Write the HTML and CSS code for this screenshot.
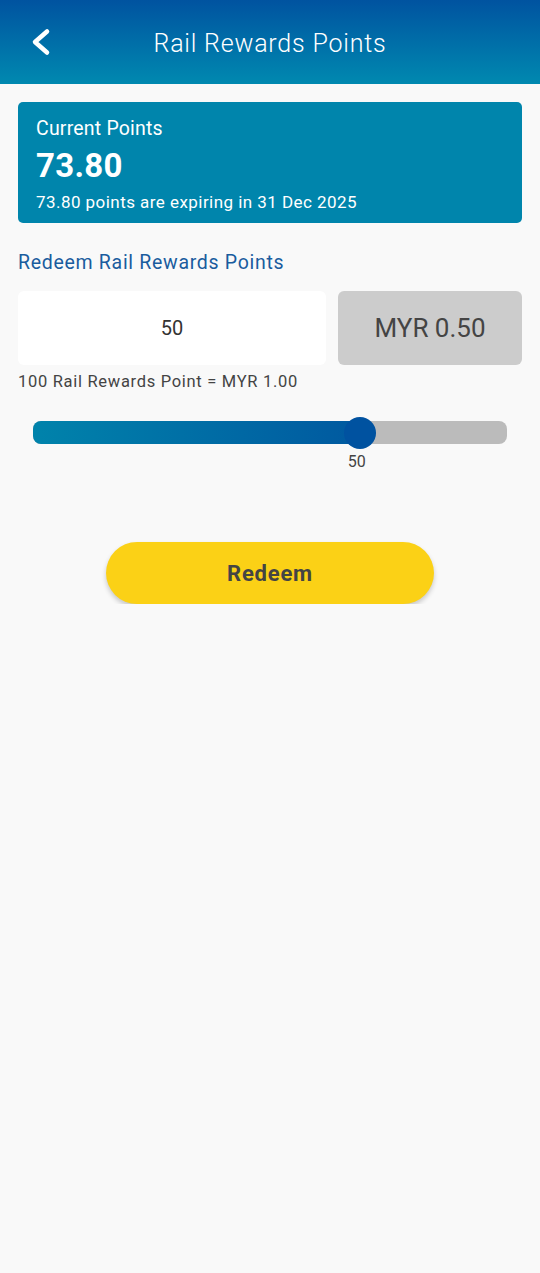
FILE: index.html
```html
<!DOCTYPE html>
<html lang="en">
<head>
    <meta charset="UTF-8">
    <meta name="viewport" content="width=device-width, initial-scale=1.0">
    <title>Rail Rewards Points</title>
    <link rel="stylesheet" href="styles.css">
</head>
<body>
    <!-- Top bar -->
    <header class="topbar">
        <button class="back-btn" aria-label="Back">
            <svg width="22" height="28" viewBox="0 0 22 28">
                <path d="M17 3.5 L5 14 L17 24.5" fill="none" stroke="#fff" stroke-width="4.5" stroke-linecap="round" stroke-linejoin="round"/>
            </svg>
        </button>
        <h1 class="topbar-title">Rail Rewards Points</h1>
    </header>

    <main class="content">
        <!-- Current points card -->
        <div class="points-card">
            <div class="points-label">Current Points</div>
            <div class="points-value">73.80</div>
            <div class="points-expiry">73.80 points are expiring in 31 Dec 2025</div>
        </div>

        <h2 class="section-title">Redeem Rail Rewards Points</h2>

        <div class="redeem-row">
            <div class="points-input">50</div>
            <div class="myr-box">MYR 0.50</div>
        </div>
        <p class="rate">100 Rail Rewards Point = MYR 1.00</p>

        <!-- Slider -->
        <div class="slider">
            <div class="slider-track">
                <div class="slider-fill" style="width: 69%;"></div>
                <div class="slider-thumb" style="left: 69%;"></div>
            </div>
            <div class="slider-value-row">
                <span class="slider-value" style="left: 68.3%;">50</span>
            </div>
        </div>

        <div class="btn-wrap">
            <button class="redeem-btn">Redeem</button>
        </div>
    </main>
</body>
</html>
```

FILE: styles.css
```css
body {
    margin: 0;
    padding: 0;
    font-family: Roboto, "Liberation Sans", Arial, sans-serif;
    background-color: #f9f9f9;
    color: #444;
}

.topbar {
    height: 84px;
    background: linear-gradient(to bottom, #0053a0, #0089b0);
    display: flex;
    align-items: center;
    justify-content: center;
    position: relative;
}

.back-btn {
    position: absolute;
    left: 30px;
    top: 28px;
    background: none;
    border: none;
    padding: 0;
    cursor: pointer;
}

.topbar-title {
    margin: 0;
    color: #fff;
    font-size: 25px;
    font-weight: 300;
    letter-spacing: 0.8px;
    padding-top: 2px;
}

.content {
    padding: 18px 18px 0 18px;
}

.points-card {
    background-color: #0085ac;
    border-radius: 5px;
    padding: 15px 18px 10px 18px;
    color: #fff;
}

.points-label {
    font-size: 19.5px;
    line-height: 24px;
    letter-spacing: 0.2px;
}

.points-value {
    font-size: 33px;
    font-weight: 700;
    line-height: 42px;
    margin-top: 4px;
    letter-spacing: 0.3px;
}

.points-expiry {
    font-size: 17px;
    line-height: 22px;
    margin-top: 4px;
    letter-spacing: 0.45px;
}

.section-title {
    margin: 28px 0 16px 0;
    font-size: 19.5px;
    font-weight: 400;
    color: #1a5c9e;
    line-height: 24px;
    letter-spacing: 0.7px;
}

.redeem-row {
    display: flex;
    gap: 12px;
}

.points-input {
    flex: 0 0 308px;
    height: 74px;
    background: #fff;
    border-radius: 6px;
    display: flex;
    align-items: center;
    justify-content: center;
    font-size: 20px;
    color: #333;
}

.myr-box {
    flex: 1;
    height: 74px;
    background: #cccccc;
    border-radius: 6px;
    display: flex;
    align-items: center;
    justify-content: center;
    font-size: 26px;
    color: #444;
}

.rate {
    margin: 7px 0 0 0;
    font-size: 16.5px;
    line-height: 20px;
    color: #444;
    letter-spacing: 0.7px;
}

.slider {
    padding: 29px 15px 0 15px;
}

.slider-track {
    position: relative;
    height: 23px;
    border-radius: 8px;
    background: #bbbbbb;
}

.slider-fill {
    height: 100%;
    border-radius: 8px 0 0 8px;
    background: linear-gradient(to right, #0083ab, #0059a0);
}

.slider-thumb {
    position: absolute;
    top: 50%;
    width: 32px;
    height: 32px;
    margin-left: -16px;
    margin-top: -16px;
    border-radius: 50%;
    background: #0052a0;
}

.slider-value-row {
    position: relative;
    height: 30px;
}

.slider-value {
    position: absolute;
    top: 8px;
    transform: translateX(-50%);
    font-size: 16px;
    color: #444;
}

.btn-wrap {
    display: flex;
    justify-content: center;
    padding-top: 68px;
}

.redeem-btn {
    width: 328px;
    height: 62px;
    border: none;
    border-radius: 31px;
    background-color: #fbd116;
    box-shadow: 0 3px 5px rgba(0, 0, 0, 0.2);
    font-family: Roboto, "Liberation Sans", Arial, sans-serif;
    font-size: 22px;
    font-weight: 700;
    letter-spacing: 0.8px;
    color: #444;
    cursor: pointer;
}
```
